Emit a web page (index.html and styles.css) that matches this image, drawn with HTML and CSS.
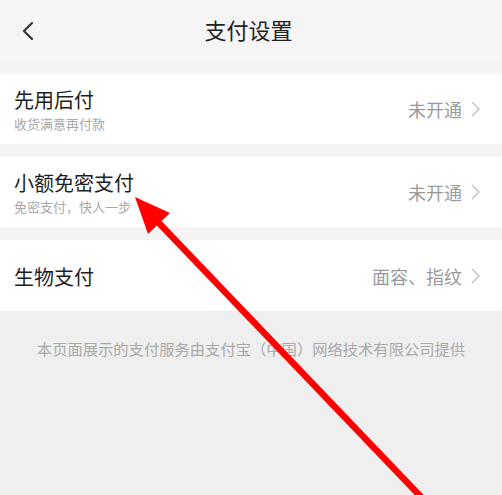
FILE: index.html
```html
<!DOCTYPE html>
<html lang="zh-CN">
<head>
<meta charset="utf-8">
<title>支付设置</title>
<link rel="stylesheet" href="styles.css">
</head>
<body>
<div class="page">
  <header class="topbar">
    <div class="back">
      <svg width="14" height="20" viewBox="0 0 14 20"><polyline points="11,2 3,10 11,18" fill="none" stroke="#333" stroke-width="2.2" stroke-linecap="round" stroke-linejoin="round"/></svg>
    </div>
    <h1 class="title">支付设置</h1>
    <div></div>
  </header>
  <main class="list">
    <div class="card">
      <div class="left">
        <div class="name">先用后付</div>
        <div class="desc">收货满意再付款</div>
      </div>
      <div class="right"><span class="status">未开通</span><svg class="chev" width="11" height="18" viewBox="0 0 11 18"><polyline points="2,2 9,9 2,16" fill="none" stroke="#c6c6c6" stroke-width="1.6" stroke-linejoin="round"/></svg></div>
    </div>
    <div class="card">
      <div class="left">
        <div class="name">小额免密支付</div>
        <div class="desc">免密支付，快人一步</div>
      </div>
      <div class="right"><span class="status">未开通</span><svg class="chev" width="11" height="18" viewBox="0 0 11 18"><polyline points="2,2 9,9 2,16" fill="none" stroke="#c6c6c6" stroke-width="1.6" stroke-linejoin="round"/></svg></div>
    </div>
    <div class="card single">
      <div class="left">
        <div class="name">生物支付</div>
      </div>
      <div class="right"><span class="status">面容、指纹</span><svg class="chev" width="11" height="18" viewBox="0 0 11 18"><polyline points="2,2 9,9 2,16" fill="none" stroke="#c6c6c6" stroke-width="1.6" stroke-linejoin="round"/></svg></div>
    </div>
  </main>
  <footer class="foot">本页面展示的支付服务由支付宝（中国）网络技术有限公司提供</footer>
  <svg class="arrow" width="502" height="495" viewBox="0 0 502 495">
    <line x1="424" y1="500" x2="157" y2="221" stroke="#ff0000" stroke-width="6.5"/>
    <polygon points="135,197 148,234 170,213" fill="#ff0000"/>
  </svg>
</div>
</body>
</html>
```
FILE: styles.css
```css
* { box-sizing: border-box; }
html, body { margin: 0; padding: 0; }
body {
  font-family: "Noto Sans CJK SC", "Noto Sans", sans-serif;
  background: #efefef;
  width: 502px;
  height: 495px;
  overflow: hidden;
}
.page {
  position: relative;
  width: 502px;
  height: 495px;
  display: flex;
  flex-direction: column;
}
.topbar {
  background: #f5f5f5;
  height: 60px;
  display: grid;
  grid-template-columns: 60px 1fr 60px;
  align-items: center;
}
.back {
  padding-left: 21px;
  padding-top: 2px;
  display: flex;
  align-items: center;
}
.title {
  margin: 0 0 3px 0;
  text-align: center;
  font-size: 22px;
  font-weight: 400;
  line-height: 22px;
  color: #222;
  padding-right: 5px;
}
.list {
  background: #f4f4f4;
  padding-top: 14px;
  display: flex;
  flex-direction: column;
  gap: 13px;
}
.card {
  background: #fff;
  height: 70px;
  display: flex;
  align-items: center;
  justify-content: space-between;
  padding: 0 21px 0 14px;
}
.card.single { height: 71px; }
.left {
  display: flex;
  flex-direction: column;
  padding-top: 2px;
}
.name {
  font-size: 20px;
  line-height: 20px;
  color: #1e1e1e;
}
.desc {
  margin-top: 7px;
  font-size: 13px;
  line-height: 13px;
  color: #a8a8a8;
}
.right {
  display: flex;
  align-items: center;
  gap: 8px;
}
.status {
  font-size: 18px;
  line-height: 18px;
  color: #9a9a9a;
}
.chev { display: block; }
.foot {
  flex: 1;
  background: #efefef;
  padding-top: 30px;
  text-align: center;
  font-size: 15.3px;
  line-height: 15px;
  color: #a9a9a9;
}
.arrow {
  position: absolute;
  left: 0;
  top: 0;
  pointer-events: none;
}
```
